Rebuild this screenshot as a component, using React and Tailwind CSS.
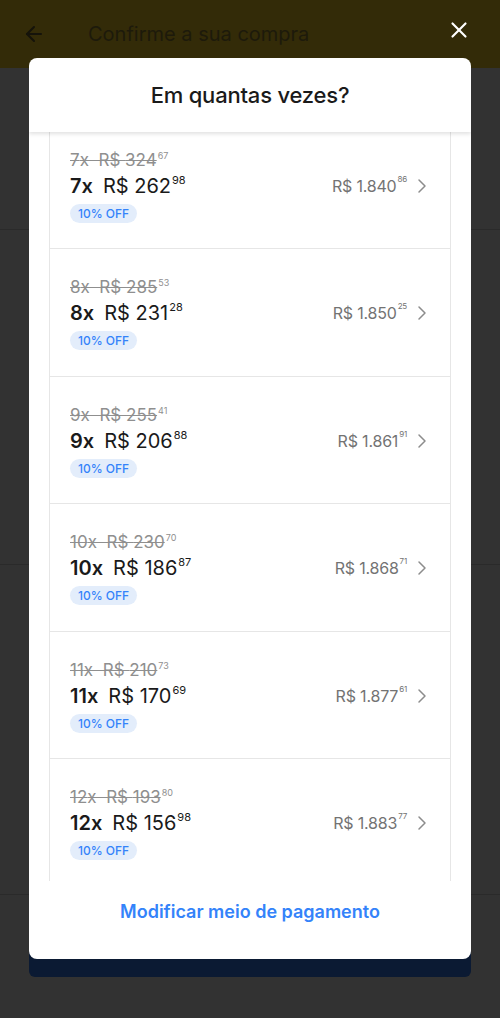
import React from 'react';
import { ArrowLeft, X } from 'lucide-react';

const options = [
  { n: 7, old: '324', oldC: '67', price: '262', priceC: '98', total: '1.840', totalC: '86' },
  { n: 8, old: '285', oldC: '53', price: '231', priceC: '28', total: '1.850', totalC: '25' },
  { n: 9, old: '255', oldC: '41', price: '206', priceC: '88', total: '1.861', totalC: '91' },
  { n: 10, old: '230', oldC: '70', price: '186', priceC: '87', total: '1.868', totalC: '71' },
  { n: 11, old: '210', oldC: '73', price: '170', priceC: '69', total: '1.877', totalC: '61' },
  { n: 12, old: '193', oldC: '80', price: '156', priceC: '98', total: '1.883', totalC: '77' },
];

const Chevron = () => (
  <svg width="10" height="16" viewBox="0 0 10 16" fill="none">
    <path d="M2 2l6 6-6 6" stroke="#8c8c8c" strokeWidth="1.5" strokeLinecap="round" strokeLinejoin="round" />
  </svg>
);

const InstallmentRow = ({ o }) => (
  <div className="h-[127.5px] border-b border-[#e6e6e6] px-5 pt-[28px] flex items-start justify-between">
    <div className="flex flex-col">
      <div className="h-[20px] leading-[20px] text-[17px] text-[#8f8f8f]">
        <span className="line-through decoration-[#8f8f8f]">{o.n}x&nbsp; R$ {o.old}</span>
        <span className="inline-block text-[9px] leading-[10px] align-top relative top-[1px] ml-[1px]">{o.oldC}</span>
      </div>
      <div className="h-[32px] leading-[32px] text-[20px] text-[#1a1a1a]">
        <span className="font-semibold">{o.n}x</span>
        <span className="ml-[10px]">R$ {o.price}</span>
        <span className="text-[11px] align-top relative top-[-6px] ml-[1px]">{o.priceC}</span>
      </div>
      <div className="mt-[2px] self-start h-[19px] leading-[19px] px-[8px] rounded-full bg-[#e3edfb] text-[#3483fa] text-[12px] font-medium">
        10% OFF
      </div>
    </div>
    <div className="mt-[20px] h-[32px] flex items-center gap-[10px] pr-[3px]">
      <span className="text-[16px] text-[#737373] tracking-[-0.2px]">
        R$ {o.total}
        <span className="text-[8px] align-top relative top-[-1px] ml-[1px]">{o.totalC}</span>
      </span>
      <Chevron />
    </div>
  </div>
);

export default function App() {
  return (
    <div className="relative w-[500px] h-[1018px] overflow-hidden bg-[#323232]" style={{ fontFamily: 'Inter, "Noto Sans", sans-serif' }}>
      {/* page behind the overlay (dimmed) */}
      <header className="h-[68px] bg-[#332b08] flex items-center pl-[22px] pr-[28px]">
        <ArrowLeft size={24} strokeWidth={2} className="text-[#15130a]" />
        <span className="ml-[42px] text-[20px] text-[#1d1a0b]">Confirme a sua compra</span>
        <X size={26} strokeWidth={2} className="ml-auto text-white -mt-[8px]" />
      </header>
      <div className="h-[162px] border-b border-[#2a2a2a]" />
      <div className="h-[335px] border-b border-[#2a2a2a]" />
      <div className="h-[330px] border-b border-[#2a2a2a]" />
      <div className="px-[29px] pt-[34px]">
        <div className="h-[48px] rounded-[6px] bg-[#0b1a33]" />
      </div>

      {/* modal */}
      <div className="absolute left-[29px] top-[58px] w-[442px] h-[901px] bg-white rounded-[8px] flex flex-col overflow-hidden">
        <div className="relative z-10 h-[74px] shrink-0 flex items-center justify-center shadow-[0_2px_4px_rgba(0,0,0,0.12)]">
          <h2 className="text-[22px] font-medium text-[#1a1a1a] tracking-[-0.2px]">Em quantas vezes?</h2>
        </div>
        <div className="flex-1 overflow-hidden px-5">
          <div className="-mt-[10.5px] border-x border-[#e6e6e6]">
            {options.map((o) => (
              <InstallmentRow key={o.n} o={o} />
            ))}
          </div>
        </div>
        <div className="h-[78px] shrink-0 flex items-center justify-center pb-[18px]">
          <span className="text-[18px] font-semibold text-[#3483fa]">Modificar meio de pagamento</span>
        </div>
      </div>
    </div>
  );
}
